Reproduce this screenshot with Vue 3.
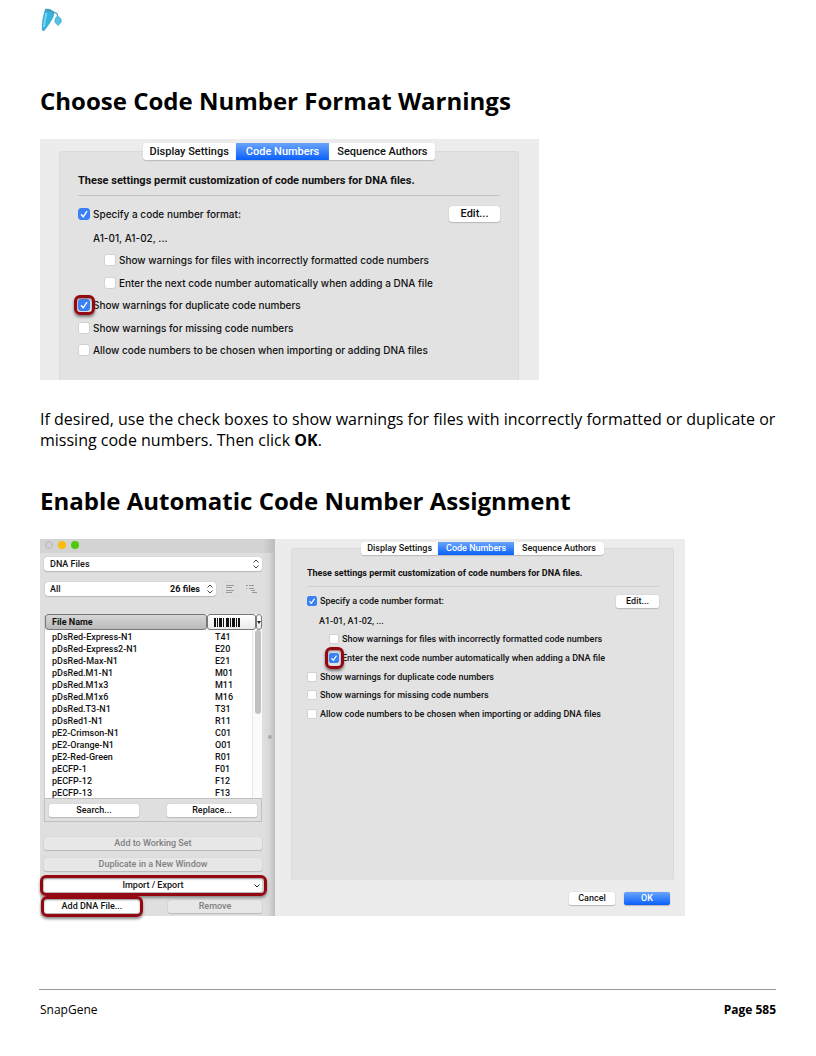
<script setup>
const tabs = ['Display Settings', 'Code Numbers', 'Sequence Authors']

const options = [
  { key: 'format-warning', text: 'Show warnings for files with incorrectly formatted code numbers', sub: true },
  { key: 'auto-next', text: 'Enter the next code number automatically when adding a DNA file', sub: true },
  { key: 'duplicate', text: 'Show warnings for duplicate code numbers' },
  { key: 'missing', text: 'Show warnings for missing code numbers' },
  { key: 'choose', text: 'Allow code numbers to be chosen when importing or adding DNA files' },
]

const files = [
  ['pDsRed-Express-N1', 'T41'],
  ['pDsRed-Express2-N1', 'E20'],
  ['pDsRed-Max-N1', 'E21'],
  ['pDsRed.M1-N1', 'M01'],
  ['pDsRed.M1x3', 'M11'],
  ['pDsRed.M1x6', 'M16'],
  ['pDsRed.T3-N1', 'T31'],
  ['pDsRed1-N1', 'R11'],
  ['pE2-Crimson-N1', 'C01'],
  ['pE2-Orange-N1', 'O01'],
  ['pE2-Red-Green', 'R01'],
  ['pECFP-1', 'F01'],
  ['pECFP-12', 'F12'],
  ['pECFP-13', 'F13'],
]
</script>

<template>
  <div class="page">
    <header class="brand">
      <svg width="22" height="24" viewBox="0 0 22 24" role="img" aria-label="SnapGene">
        <path d="M5.5 1.2 Q10 .2 13.8 4 L13 9 Q9 17 3.8 22.8 L2.3 22 Q2 11 5.5 1.2Z" fill="#35b4de" stroke="#2b9cc8" stroke-width=".8" />
        <path d="M6.5 5 Q4.5 12 4 19" fill="none" stroke="#7fd8f3" stroke-width="1.8" />
        <path d="M5.3 1.5 Q10 .4 14.2 3.8 L14 6 Q10 3 5.3 3Z" fill="#4a98b8" />
        <path d="M13.5 4.6 Q17.6 4 17.6 8.5" fill="none" stroke="#4a9cbd" stroke-width="1.2" />
        <path d="M17.6 8 Q22 10.5 21.3 14 L18 17.5 L15.2 14.5 Q14.2 10 17.6 8Z" fill="#56c2e6" stroke="#319fc6" stroke-width=".7" />
      </svg>
    </header>

    <main>
      <h1>Choose Code Number Format Warnings</h1>

      <section class="shot first prefs" aria-label="Code number preferences">
        <div class="tabs" role="tablist">
          <button v-for="(t, i) in tabs" :key="t" type="button" role="tab" :class="{ active: i === 1 }">{{ t }}</button>
        </div>
        <div class="group">
          <p class="lead">These settings permit customization of code numbers for DNA files.</p>
          <div class="format">
            <label>
              <span class="tick">
                <input type="checkbox" checked />
                <svg viewBox="0 0 12 12"><path d="M3 6.3 5.2 8.8 9 3.2" /></svg>
              </span>Specify a code number format:
            </label>
            <button type="button" class="btn">Edit...</button>
          </div>
          <p class="sample">A1-01, A1-02, ...</p>
          <div class="options">
            <label v-for="o in options" :key="o.key" :class="{ sub: o.sub }">
              <span class="tick" :class="{ ring: o.key === 'duplicate' }">
                <input type="checkbox" :checked="o.key === 'duplicate'" />
                <svg viewBox="0 0 12 12"><path d="M3 6.3 5.2 8.8 9 3.2" /></svg>
              </span>{{ o.text }}
            </label>
          </div>
        </div>
      </section>

      <p class="body">If desired, use the check boxes to show warnings for files with incorrectly formatted or duplicate or missing code numbers. Then click <strong>OK</strong>.</p>

      <h2>Enable Automatic Code Number Assignment</h2>

      <section class="shot second" aria-label="Collection window">
        <div class="side">
          <div class="titlebar"><i class="grey"></i><i class="yellow"></i><i class="green"></i></div>
          <div class="side-body">
            <div class="picker">
              <select aria-label="Collection view"><option>DNA Files</option></select>
              <svg class="updown" viewBox="0 0 8 10"><path d="M1.5 3.5 4 1 6.5 3.5M1.5 6.5 4 9 6.5 6.5" /></svg>
            </div>
            <div class="filter">
              <div class="picker">
                <select aria-label="Filter"><option>All</option></select>
                <span class="count">26 files</span>
                <svg class="updown" viewBox="0 0 8 10"><path d="M1.5 3.5 4 1 6.5 3.5M1.5 6.5 4 9 6.5 6.5" /></svg>
              </div>
              <button type="button" class="view boxed" aria-label="List view"><svg viewBox="0 0 12 12"><path d="M2 2.5H10M2 4.5H8M2 7.5H10M2 9.5H8" /></svg></button>
              <button type="button" class="view" aria-label="Outline view"><svg viewBox="0 0 12 12"><path d="M1 2.5H3M4 2.5H9M1 5.5H2M4 5.5H9M6 7.5H10M7 9.5H12" /></svg></button>
            </div>

            <div class="list">
              <table>
                <colgroup><col /><col class="code" /><col class="more" /></colgroup>
                <thead>
                  <tr>
                    <th class="name" scope="col">File Name</th>
                    <th scope="col" aria-label="Code number">
                      <svg class="bars" viewBox="0 0 26 9"><path d="M0 0H2V9H0ZM3 0H4V9H3ZM5 0H8V9H5ZM9 0H10V9H9ZM12 0H15V9H12ZM16 0H17V9H16ZM18 0H21V9H18ZM22 0H23V9H22ZM24 0H26V9H24Z" /></svg>
                    </th>
                    <th scope="col" aria-label="Columns"><svg class="down" viewBox="0 0 4 3"><path d="M0 0H4L2 3Z" /></svg></th>
                  </tr>
                </thead>
                <tbody>
                  <tr v-for="f in files" :key="f[0]"><td>{{ f[0] }}</td><td>{{ f[1] }}</td><td></td></tr>
                </tbody>
              </table>
              <span class="track"><span class="thumb"></span></span>
            </div>
            <div class="find">
              <button type="button" class="btn">Search...</button>
              <button type="button" class="btn">Replace...</button>
            </div>

            <div class="actions">
              <button type="button" class="btn" disabled>Add to Working Set</button>
              <button type="button" class="btn" disabled>Duplicate in a New Window</button>
              <span class="mark wide">
                <button type="button" class="btn">Import / Export</button>
                <svg class="chev" viewBox="0 0 8 6"><path d="M1.5 1.5 4 4 6.5 1.5" /></svg>
              </span>
              <div class="pair">
                <span class="mark"><button type="button" class="btn">Add DNA File...</button></span>
                <button type="button" class="btn" disabled>Remove</button>
              </div>
            </div>
          </div>
          <span class="grip"></span>
        </div>

        <div class="dialog prefs small">
          <div class="tabs" role="tablist">
            <button v-for="(t, i) in tabs" :key="t" type="button" role="tab" :class="{ active: i === 1 }">{{ t }}</button>
          </div>
          <div class="group">
            <p class="lead">These settings permit customization of code numbers for DNA files.</p>
            <div class="format">
              <label>
                <span class="tick">
                  <input type="checkbox" checked />
                  <svg viewBox="0 0 12 12"><path d="M3 6.3 5.2 8.8 9 3.2" /></svg>
                </span>Specify a code number format:
              </label>
              <button type="button" class="btn">Edit...</button>
            </div>
            <p class="sample">A1-01, A1-02, ...</p>
            <div class="options">
              <label v-for="o in options" :key="o.key" :class="{ sub: o.sub }">
                <span class="tick" :class="{ ring: o.key === 'auto-next' }">
                  <input type="checkbox" :checked="o.key === 'auto-next'" />
                  <svg viewBox="0 0 12 12"><path d="M3 6.3 5.2 8.8 9 3.2" /></svg>
                </span>{{ o.text }}
              </label>
            </div>
          </div>
          <div class="confirm">
            <button type="button" class="btn">Cancel</button>
            <button type="button" class="btn primary">OK</button>
          </div>
        </div>
      </section>
    </main>

    <footer><span>SnapGene</span><strong>Page 585</strong></footer>
  </div>
</template>

<style>
body { margin: 0; background: #fff; }
</style>

<style scoped>
* { box-sizing: border-box; }
.page {
  min-height: 100vh; padding: 0 40px; display: flex; flex-direction: column;
  font-family: "Open Sans", "Noto Sans", sans-serif; color: #000;
}
.brand { height: 84px; padding-top: 8px; }
.brand svg { display: block; }
h1, h2 { margin: 0; font-size: 24px; line-height: 34px; font-weight: 700; white-space: nowrap; }
.body { margin: 29px 0 33px; font-size: 16px; line-height: 21px; }
p { margin: 0; }
button, select, input { font: inherit; color: inherit; margin: 0; }

.shot { font-family: Roboto, "Liberation Sans", sans-serif; font-weight: 500; color: #111; background: #ececec; white-space: nowrap; }
.first { max-width: 499px; margin-top: 21px; padding: 4px 20px 0 19px; font-size: 11px; overflow: hidden; }
.first label, .first .sample { font-family: Inter, "Liberation Sans", sans-serif; font-size: 10px; }
.second { max-width: 645px; margin-top: 21px; font-size: 9px; display: flex; }

.tabs { position: relative; z-index: 1; display: flex; justify-content: center; height: 17px; }
.tabs button { border: 0; background: #fff; padding: 0 7px; box-shadow: 0 1px 1px #bbb; line-height: 16px; }
.tabs button:first-child { border-radius: 3px 0 0 3px; }
.tabs button:last-child { border-radius: 0 3px 3px 0; padding: 0 8px; }
.tabs .active { color: #fff; background: linear-gradient(#6aa5fb, #0a60fb); padding: 0 10px; }
.group { margin-top: -9px; border: 1px solid #dadada; border-bottom: 0; border-radius: 4px 4px 0 0; background: #e2e2e2; padding: 21px 18px 21px; }
.lead { font-weight: 700; line-height: 16px; padding-bottom: 6px; border-bottom: 1px solid #c3c3c3; }
.format { display: flex; justify-content: space-between; align-items: center; height: 18px; margin-top: 9px; }
label { display: flex; align-items: center; gap: 3px; }
.sample { margin: 7px 0 5px 15px; line-height: 16px; }
.options { display: flex; flex-direction: column; justify-content: space-between; height: 108px; }
.options label { height: 18px; }
.options .sub { margin-left: 26px; }
.tick { position: relative; width: 12px; height: 12px; flex: none; }
.tick input { appearance: none; display: block; width: 100%; height: 100%; background: #fff; border: 1px solid #d2d2d2; border-radius: 3px; }
.tick input:checked { background: #3a80f6; border-color: #3a80f6; }
.tick svg { position: absolute; inset: 0; display: none; fill: none; stroke: #fff; stroke-width: 1.4; }
.tick input:checked + svg { display: block; }
.ring::after {
  content: ""; position: absolute; inset: -4px -5px -4px -4px; border: 3px solid #930811; border-radius: 6px;
  box-shadow: 0 2px 3px #777, inset 0 1px 2px #777;
}
.btn {
  border: 0; border-radius: 3px; background: #fff; box-shadow: 0 0 1px #aaa, 0 1px 1px #bbb;
  height: 16px; line-height: 16px; padding: 0; text-align: center;
}
.first .format .btn { width: 51px; }

.side { position: relative; width: 235px; flex: none; background: linear-gradient(90deg, #dfdfdf 223px, #d8d8d8 229px, #bebebe); }
.titlebar { height: 14px; background: linear-gradient(90deg, #d3d3d3 223px, #bcbcbc); display: flex; gap: 5px; padding: 2px 5px; }
.titlebar i { width: 8px; height: 8px; border-radius: 50%; }
.grey { background: #d0d0d0; border: 1px solid #bdbdbd; }
.yellow { background: #fdbc0c; }
.green { background: #51c90a; }
.side-body { padding: 4px 13px 3px 4px; }
.picker { position: relative; }
select { appearance: none; display: block; width: 100%; height: 14px; border: 0; border-radius: 3px; padding: 0 6px; background: #fff; box-shadow: 0 0 1px #999, 0 1px 1px #bbb; line-height: 14px; }
.updown { position: absolute; right: 2px; top: 2px; width: 8px; height: 10px; fill: none; stroke: #444; stroke-width: 1; }
.filter { display: flex; align-items: center; gap: 7px; margin: 11px 0 18px 1px; }
.filter .picker { width: 171px; }
.filter select { padding: 0 5px; }
.count { position: absolute; right: 16px; top: 0; line-height: 14px; font-weight: 700; }
.view { border: 0; background: transparent; padding: 0; width: 14px; height: 14px; display: grid; place-items: center; }
.boxed { box-shadow: 0 0 1px #bbb; }
.view svg { width: 12px; height: 12px; fill: none; stroke: #999; }
.list { position: relative; background: #fff; height: 184px; overflow: hidden; border-left: 1px solid #ccc; }
table { width: 100%; table-layout: fixed; border-collapse: separate; border-spacing: 0; }
.code { width: 49px; }
.more { width: 6px; }
th { height: 16px; padding: 0; background: linear-gradient(#fff, #e9e9e9); border: 1px solid #777; border-radius: 3px; line-height: 12px; text-align: center; font-weight: 700; }
th.name { background: linear-gradient(#d6d6d6, #bababa); text-align: left; padding-left: 6px; }
.bars { display: block; width: 26px; height: 9px; margin: 0 auto 0 6px; fill: #111; }
.down { display: block; width: 4px; height: 3px; fill: #222; }
td { height: 12px; line-height: 12px; padding: 0 7px; }
tbody { position: relative; top: 1px; }
td + td { padding: 0 0 0 8px; }
.track { position: absolute; right: 0; top: 16px; bottom: 0; width: 10px; background: #fafafa; border-left: 1px solid #e8e8e8; }
.thumb { display: block; width: 6px; height: 84px; margin: 0 auto; border-radius: 3px; background: #c1c1c1; }
.find { display: flex; justify-content: space-between; border: 1px solid #c0c0c0; height: 24px; padding: 5px 4px; }
.side .btn, .small .btn { height: 13px; line-height: 13px; border-radius: 2px; }
.find .btn { width: 90px; }
.actions { display: flex; flex-direction: column; gap: 8px; margin-top: 15px; }
.actions > .btn, .mark .btn { width: 100%; }
.btn:disabled { color: #808080; background: #e7e7e7; }
.mark { position: relative; display: block; }
.mark::after {
  content: ""; position: absolute; inset: -4px -3px; border: 3px solid #930811; border-radius: 6px;
  box-shadow: 0 2px 3px #888, inset 0 1px 2px #999; pointer-events: none;
}
.wide::after { inset: -4px -5px -4px -4px; }
.mark .btn { display: block; }
.chev { position: absolute; right: 1px; top: 4px; width: 8px; height: 6px; fill: none; stroke: #222; }
.pair { display: flex; justify-content: space-between; }
.pair .mark { width: 96px; }
.pair > .btn { width: 94px; }
.grip { position: absolute; right: 3px; top: 196px; width: 4px; height: 4px; border-radius: 50%; background: #aaa; }

.dialog { flex: 1; min-width: 0; padding: 3px 11px 11px 16px; }
.small .tabs { height: 13px; }
.small .tabs button { line-height: 13px; padding: 0 6px; }
.small .tabs .active, .small .tabs button:last-child { padding: 0 8px; }
.small .group { margin-top: -7px; padding: 16px 14px 0 15px; height: 332px; border-radius: 3px; }
.small .lead { padding-bottom: 5px; border-color: #d0d0d0; }
.small .format { height: 16px; margin-top: 6px; }
.small .format .btn { width: 43px; }
.small .sample { margin: 4px 0 2px 12px; }
.small .options { height: 91px; }
.small .options label { height: 16px; }
.small .options .sub { margin-left: 22px; }
.small .tick { width: 10px; height: 10px; }
.small .tick input { border-radius: 2px; }
.small .ring::after { inset: -6px -5px -6px -4px; }
.confirm { display: flex; justify-content: flex-end; gap: 9px; margin-top: 12px; padding-right: 4px; }
.confirm .btn { width: 46px; }
.primary { color: #fff; background: linear-gradient(#6aa5fb, #0a60fb); }

footer { margin: auto 0 0 -1px; height: 67px; padding: 11px 0 0 1px; border-top: 1px solid #999; display: flex; justify-content: space-between; font-size: 12px; line-height: 17px; }
</style>
